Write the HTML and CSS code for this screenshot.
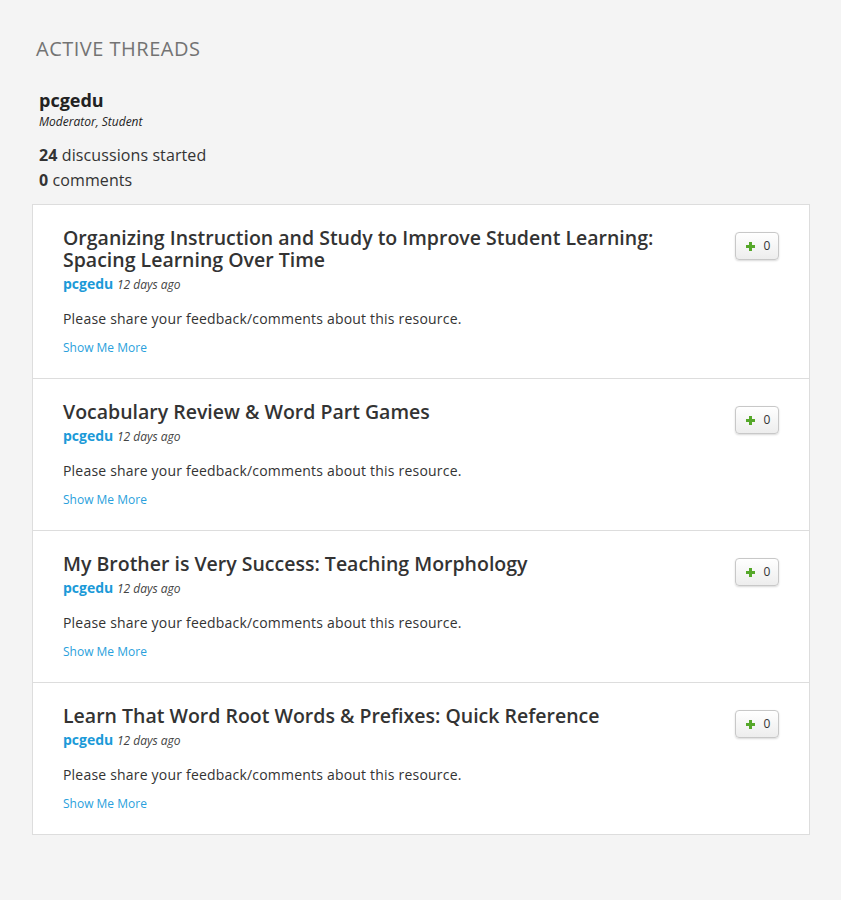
FILE: index.html
```html
<!DOCTYPE html>
<html>
<head>
<meta charset="utf-8">
<link rel="stylesheet" href="styles.css">
</head>
<body>
<div class="page">
  <h1 class="heading">ACTIVE THREADS</h1>
  <div class="profile">
    <div class="name">pcgedu</div>
    <div class="role">Moderator, Student</div>
    <div class="stats">
      <div><b>24</b> discussions started</div>
      <div><b>0</b> comments</div>
    </div>
  </div>
  <div class="card">
    <div class="thread">
      <div class="main">
        <h2 class="title">Organizing Instruction and Study to Improve Student Learning: Spacing Learning Over Time</h2>
        <div class="meta"><a class="author">pcgedu</a> <span class="ago">12 days ago</span></div>
        <p class="desc">Please share your feedback/comments about this resource.</p>
        <a class="more">Show Me More</a>
      </div>
      <button class="vote"><svg class="plus" width="9" height="9" viewBox="0 0 9 9"><path d="M3 0h3v3h3v3H6v3H3V6H0V3h3z"/></svg><span class="count">0</span></button>
    </div>
    <div class="thread">
      <div class="main">
        <h2 class="title">Vocabulary Review &amp; Word Part Games</h2>
        <div class="meta"><a class="author">pcgedu</a> <span class="ago">12 days ago</span></div>
        <p class="desc">Please share your feedback/comments about this resource.</p>
        <a class="more">Show Me More</a>
      </div>
      <button class="vote"><svg class="plus" width="9" height="9" viewBox="0 0 9 9"><path d="M3 0h3v3h3v3H6v3H3V6H0V3h3z"/></svg><span class="count">0</span></button>
    </div>
    <div class="thread">
      <div class="main">
        <h2 class="title">My Brother is Very Success: Teaching Morphology</h2>
        <div class="meta"><a class="author">pcgedu</a> <span class="ago">12 days ago</span></div>
        <p class="desc">Please share your feedback/comments about this resource.</p>
        <a class="more">Show Me More</a>
      </div>
      <button class="vote"><svg class="plus" width="9" height="9" viewBox="0 0 9 9"><path d="M3 0h3v3h3v3H6v3H3V6H0V3h3z"/></svg><span class="count">0</span></button>
    </div>
    <div class="thread">
      <div class="main">
        <h2 class="title">Learn That Word Root Words &amp; Prefixes: Quick Reference</h2>
        <div class="meta"><a class="author">pcgedu</a> <span class="ago">12 days ago</span></div>
        <p class="desc">Please share your feedback/comments about this resource.</p>
        <a class="more">Show Me More</a>
      </div>
      <button class="vote"><svg class="plus" width="9" height="9" viewBox="0 0 9 9"><path d="M3 0h3v3h3v3H6v3H3V6H0V3h3z"/></svg><span class="count">0</span></button>
    </div>
  </div>
</div>
</body>
</html>
```
FILE: styles.css
```css
html, body {
  margin: 0;
  padding: 0;
  background: #f4f4f4;
}
body {
  font-family: "Open Sans", "Liberation Sans", sans-serif;
  color: #333;
}
.page {
  padding: 37px 31px 40px 32px;
}
.heading {
  margin: 0;
  padding-left: 4px;
  font-size: 20px;
  line-height: 24px;
  font-weight: 400;
  color: #737373;
  letter-spacing: 0.5px;
}
.profile {
  padding-left: 7px;
  margin-top: 27px;
}
.name {
  font-size: 18px;
  line-height: 24px;
  font-weight: 700;
  color: #222;
}
.role {
  margin-top: 2px;
  font-size: 12px;
  line-height: 16px;
  font-style: italic;
  color: #222;
}
.stats {
  margin-top: 13px;
  font-size: 16px;
  line-height: 25px;
  color: #333;
  letter-spacing: 0.1px;
}
.stats b {
  font-weight: 700;
}
.card {
  margin-top: 11px;
  background: #fff;
  border: 1px solid #ddd;
}
.thread {
  display: flex;
  align-items: flex-start;
  padding: 22px 30px 21px 30px;
  border-top: 1px solid #ddd;
}
.thread:first-child {
  border-top: none;
}
.main {
  flex: 1;
  min-width: 0;
}
.title {
  margin: 0;
  max-width: 620px;
  font-size: 19.5px;
  line-height: 22px;
  font-weight: 600;
  color: #333;
}
.meta {
  margin-top: 3px;
  height: 20px;
  line-height: 20px;
  font-size: 14px;
  overflow: hidden;
}
.author {
  font-weight: 700;
  color: #1b9ad8;
}
.ago {
  font-size: 12px;
  line-height: 1;
  font-style: italic;
  color: #444;
}
.desc {
  margin: 15px 0 0 0;
  font-size: 14px;
  line-height: 20px;
  color: #333;
  letter-spacing: 0.2px;
}
.more {
  display: block;
  margin-top: 10px;
  font-size: 12px;
  line-height: 18px;
  color: #2a9fdc;
}
.vote {
  margin-top: 5px;
  width: 44px;
  height: 28px;
  padding: 0 0 0 2px;
  display: flex;
  align-items: center;
  justify-content: center;
  gap: 9px;
  border: 1px solid #c8c8c8;
  border-radius: 4px;
  background: linear-gradient(#ffffff, #ededed);
  box-shadow: 0 1px 2px rgba(0,0,0,0.15);
  font-family: "Open Sans", "Liberation Sans", sans-serif;
}
.plus {
  fill: #56a82a;
  display: block;
}
.count {
  font-size: 12px;
  color: #333;
  line-height: 1;
}
```
